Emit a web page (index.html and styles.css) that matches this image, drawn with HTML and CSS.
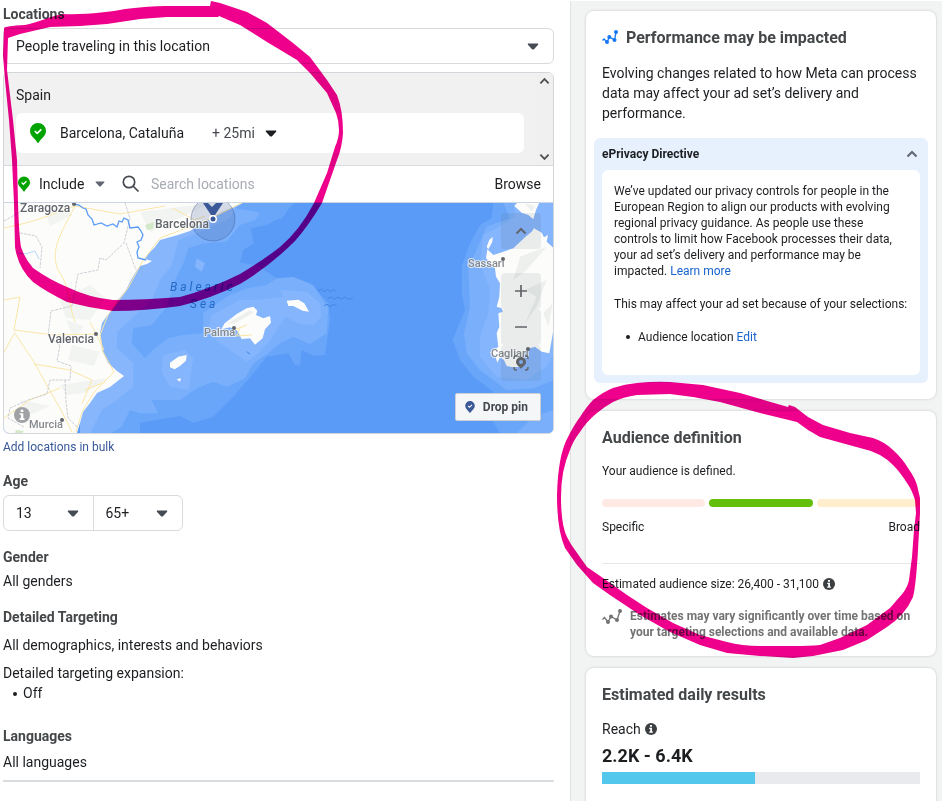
FILE: index.html
```html
<!DOCTYPE html>
<html lang="en">
<head>
<meta charset="utf-8">
<title>Ad set audience</title>
<link rel="stylesheet" href="styles.css">
</head>
<body>
<svg class="defs" aria-hidden="true">
  <symbol id="caret" viewBox="0 0 12 7"><path d="M1 0.5H11L11.3 1.5L7 6.2Q6 7 5 6.2L0.7 1.5Z"/></symbol>
  <symbol id="pin" viewBox="0 0 16 20"><path d="M8 0A8 8 0 0 0 0 8C0 13 5 15.500 7 19.200Q8 20.600 9 19.200C11 15.500 16 13 16 8A8 8 0 0 0 8 0Z"/><path d="M4.800 8L7.200 10.400L11.300 6.300" fill="none" stroke="#fff" stroke-width="1.700"/></symbol>
  <symbol id="info" viewBox="0 0 12 12"><circle cx="6" cy="6" r="6"/><path d="M5 2H7V3.700H5ZM4.200 4.700H7V8.500H7.900V9.700H4.200V8.500H5.200V5.900H4.200Z" fill="#fff"/></symbol>
  <symbol id="up" viewBox="0 0 12 8"><path d="M1.500 6.500L6 2L10.500 6.500" fill="none" stroke="currentColor" stroke-width="2"/></symbol>
  <symbol id="trend" viewBox="0 0 20 18"><path d="M0.500 11.500L2.500 9.500L6 14L9 8.500L15 12L18 3" fill="none" stroke="currentColor" stroke-width="1.300"/><circle cx="6" cy="14" r="2"/><circle cx="9" cy="8.500" r="2"/><circle cx="15" cy="12" r="2"/><circle cx="18" cy="3" r="2"/></symbol>
  <symbol id="trend-bold" viewBox="0 0 16 16"><path d="M0.500 10.500L2 9L5 12L7.500 7L12.500 10L14 2.500" fill="none" stroke="currentColor" stroke-width="1.300"/><circle cx="5" cy="12" r="2"/><circle cx="7.300" cy="7" r="2"/><circle cx="12.500" cy="10" r="2"/><circle cx="14" cy="2" r="2"/></symbol>
</svg>

<div class="app">
  <main class="settings">
    <label class="heading" for="who">Locations</label>
    <div class="picker picker-box">
      <select id="who"><option>People traveling in this location</option></select>
      <svg class="caret" aria-hidden="true"><use href="#caret"/></svg>
    </div>

    <section class="places">
      <div class="chosen">
        <div class="chosen-list">
          <div class="country">Spain</div>
          <div class="place">
            <svg class="pin" aria-hidden="true"><use href="#pin"/></svg>
            <span>Barcelona, Cataluña</span>
            <div class="picker radius">
              <select aria-label="Radius"><option>+ 25mi</option></select>
              <svg class="caret" aria-hidden="true"><use href="#caret"/></svg>
            </div>
          </div>
        </div>
        <div class="scroller">
          <button type="button" aria-label="Scroll up"><svg class="chevron" aria-hidden="true"><use href="#up"/></svg></button>
          <button type="button" aria-label="Scroll down"><svg class="chevron flip" aria-hidden="true"><use href="#up"/></svg></button>
        </div>
      </div>
      <div class="search">
        <svg class="pin pin-small" aria-hidden="true"><use href="#pin"/></svg>
        <div class="picker include">
          <select aria-label="Include or exclude"><option>Include</option></select>
          <svg class="caret caret-small" aria-hidden="true"><use href="#caret"/></svg>
        </div>
        <svg class="lens" viewBox="0 0 18 18" aria-hidden="true"><circle cx="7" cy="7" r="5.700"/><path d="M11 11L16.500 16.500"/></svg>
        <input type="text" aria-label="Search locations" placeholder="Search locations">
        <button type="button" class="browse">Browse</button>
      </div>
      <div class="map">
        <svg class="map-art" viewBox="4 203 549 230" preserveAspectRatio="xMidYMid slice" role="img" aria-label="Map of the Balearic Sea">
          <rect x="4" y="203" width="549" height="230" fill="#5a9bf7"/>
          <!-- west: sea depths and islands -->
          <g transform="translate(80 200) scale(.33333)">
            <path fill="#69a6fa" d="M0 0L650 0L600 55L560 75L512 85L522 130L490 150L480 188L530 195L590 235L640 230L690 250L745 310L750 360L735 465L700 467L665 450L660 497L645 495L625 460L560 470L520 520L460 590L400 650L340 668L300 648L180 668L180 700L0 700Z"/>
            <path fill="#7ab0fb" d="M0 0L500 0L465 25L540 38L525 60L480 75L440 125L370 130L325 145L310 190L285 240L260 320L215 375L160 385L155 430L195 475L225 445L265 415L310 405L370 400L370 340L440 290L500 265L560 255L590 235L640 232L700 256L745 325L740 400L690 432L640 410L600 430L565 460L520 490L495 535L440 560L400 545L350 565L300 600L215 600L235 640L180 640L150 630L125 680L90 700L0 700Z"/>
            <path fill="#87b6fc" d="M0 0L480 0L450 55L350 100L295 120L275 195L240 240L215 300L160 350L112 395L110 445L160 490L160 560L110 600L65 630L30 700L0 700Z"/>
            <path fill="#85b5fc" d="M395 345L480 300L530 300L610 290L600 270L680 275L720 310L725 350L700 375L655 370L615 350L575 415L540 455L500 485L465 460L420 430L385 395ZM250 465L315 450L340 475L325 570L270 560L245 515ZM350 175L375 190L365 215L345 200Z"/>
            <path fill="#fcfcfb" d="M424 388L434 370L470 342L500 325L520 320L532 332L528 345L550 355L570 348L573 368L555 388L548 415L525 434L510 415L485 417L472 392L450 382ZM620 302L655 299L673 310L687 335L668 332L640 318L625 318ZM270 488L295 470L320 465L318 482L300 498L284 508L270 502ZM290 538L303 535L300 545Z"/>
            <path fill="#edf0ed" d="M440 372L510 330L520 338L465 370Z"/>
            <path fill="none" stroke="#f8e3a0" stroke-width="3" d="M462 390L500 375M480 385L470 408L515 405"/>
            <path fill="none" stroke="#4286e4" stroke-width="3" d="M715 272L725 268L733 275L743 268L751 275L761 268L769 275M744 295L754 291L763 298L774 291L784 298L794 291L804 298L818 294M732 317L741 313L750 319L760 313L770 317M500 455L510 462"/>
          </g>
          <!-- east: sea depths, Corsica and Sardinia -->
          <g transform="translate(280 180) scale(.33333)">
            <path fill="#69a6fa" d="M640 68L635 115L600 135L570 190L545 260L545 340L555 390L530 450L518 480L540 540L580 590L640 635L625 700L660 760L822 760L822 68ZM0 68H30L15 105L0 120Z"/>
            <path fill="#7ab0fb" d="M670 68L690 115L620 140L590 210L565 260L570 380L552 460L560 520L600 570L680 630L760 625L822 600V68ZM710 760L760 710L822 690V760Z"/>
            <path fill="#85b5fc" d="M700 68L705 110L650 145L610 165L600 250L630 330L625 400L600 470L600 530L650 590L740 600L800 560L822 520V68Z"/>
            <path fill="#fcfcfb" d="M703 78L712 68L778 68L768 90L760 118L745 105L725 98ZM622 208L640 225L670 215L700 205L735 172L755 155L762 145L785 158L792 172L804 165L800 185L822 205L822 440L808 520L785 515L765 500L740 508L715 545L720 560L700 562L680 558L672 540L660 532L652 548L645 525L630 518L655 500L650 460L658 440L655 400L668 395L665 385L650 380L658 350L660 310L648 290L645 265L618 235ZM628 180L638 170L637 185L625 208L620 200Z"/>
            <path fill="#edf0ed" d="M735 70L765 78L755 95ZM720 230L800 200L740 270L700 300ZM735 330L800 300L770 380L735 430L770 350ZM790 400L818 370L805 440Z"/>
          </g>
          <!-- Iberian mainland -->
          <path fill="#fcfcfb" d="M4 203H242L222 212L205 222L190 231L178 235L160 240L155 247L148 254L145 259L152 261L147 264L140 266L137 270L131 280L126 290L118 300L112 309L107 316L102 323L100 333L102 350L108 363L117 371L124 376L110 387L97 393L90 403L83 412L80 423L77 433H4Z"/>
          <path fill="#f1f4f0" d="M60 300L90 285L105 298L90 320L66 318ZM45 212L66 206L72 215L50 226ZM72 345L100 352L94 366L68 360ZM60 385L108 378L84 393L66 395ZM140 212L210 203L180 218L150 232ZM20 400L50 406L30 415ZM66 320L84 326L74 340Z"/>
          <path fill="#d2e8c7" d="M145 225L154 222L153 229L147 230ZM16 430L24 431L22 433H15Z"/>
          <g fill="none" stroke="#fae6a7" stroke-width="1">
            <path d="M242 203L205 221L160 238L142 262L128 288L108 315L100 335L103 352L114 372L94 392L82 412L76 432"/>
            <path d="M75 206C60 235 50 250 58 270C72 290 68 305 75 322M4 228C35 222 50 215 75 206L120 214L165 206M4 300L20 297L14 330L54 335L96 334M14 334L4 352M14 332L34 362L45 382L62 412L72 432M34 364L70 370L92 380L82 404M4 418L30 400L60 388M85 390L105 382M172 208L195 220L205 216M90 322L104 350"/>
          </g>
          <g fill="none" stroke="#cdced5" stroke-width="1" stroke-dasharray="3 1">
            <path d="M4 221L20 212L25 203M20 233L36 236L42 247L40 268M125 203L130 218L124 243L106 260L100 258L98 270L78 274L72 306L51 311L48 336L60 345L57 361L71 366L70 380L50 380L47 394L28 400L10 408L8 418L24 427M65 380L66 402L68 418L78 428M126 243L136 270"/>
          </g>
          <path fill="none" stroke="#5a9bf7" stroke-width="1.300" d="M74 204L79 205L83 208L86 209L88 215L92 219L94 225L101 223L107 226L113 224L117 227L119 221L122 222L124 218L128 220L130 228L138 227L141 231L143 235L141 240L137 242L139 247L137 252L138 258L146 260"/>
          <path fill="none" stroke="#a9cbfa" stroke-width=".8" d="M17 253L25 254L35 251L39 259"/>
          <circle cx="213" cy="219" r="22" fill="#3b5998" fill-opacity=".2" stroke="#3b5998" stroke-opacity=".6" stroke-width=".7"/>
          <path fill="#3b5998" d="M203 203H208L212 207L216 203H223L215 215H211Z"/>
          <circle cx="213" cy="219" r="4" fill="#fff"/><circle cx="213" cy="219" r="2.500" fill="#3b5998"/>
          <g class="towns">
            <text x="20" y="212">Zaragoza</text><text x="155" y="228">Barcelona</text><text x="48" y="343">Valencia</text>
            <g class="towns-faint"><text x="29" y="428">Murcia</text><text x="204" y="336">Palma</text><text x="468" y="267">Sassari</text><text x="491" y="357">Cagliari</text></g>
          </g>
          <g class="sea"><text x="170" y="291">Balearic</text><text x="190" y="308">Sea</text></g>
          <g fill="#62656b"><circle cx="74" cy="204" r="2"/><circle cx="96" cy="334" r="2"/><circle cx="62" cy="420" r="2"/><circle cx="234" cy="328" r="2"/><circle cx="503" cy="259" r="2"/><circle cx="528" cy="349" r="2"/></g>
        </svg>
        <svg class="map-info" aria-hidden="true"><use href="#info"/></svg>
        <div class="map-tools">
          <button type="button" class="tool" aria-label="Collapse map"><svg class="chevron" aria-hidden="true"><use href="#up"/></svg></button>
          <div class="zoom">
            <button type="button" class="tool" aria-label="Zoom in"><svg class="sign" viewBox="0 0 12 12" aria-hidden="true"><path d="M0 6H12M6 0V12"/></svg></button>
            <button type="button" class="tool" aria-label="Zoom out"><svg class="sign" viewBox="0 0 12 12" aria-hidden="true"><path d="M0 6H12"/></svg></button>
            <button type="button" class="tool" aria-label="Locate"><svg class="locate" viewBox="0 0 16 16" aria-hidden="true"><path d="M1 4V3Q1 1 3 1H4M12 1H13Q15 1 15 3V4M15 12V13Q15 15 13 15H12M4 15H3Q1 15 1 13V12" fill="none" stroke="currentColor" stroke-width="1.400"/><path fill-rule="evenodd" d="M8 2A5 5 0 0 0 3 7C3 10 6.500 11.500 8 14C9.500 11.500 13 10 13 7A5 5 0 0 0 8 2ZM8 5A2 2 0 1 1 8 9A2 2 0 0 1 8 5Z"/></svg></button>
          </div>
          <button type="button" class="drop"><svg class="pin-tiny" aria-hidden="true"><use href="#pin"/></svg>Drop pin</button>
        </div>
      </div>
    </section>
    <a class="bulk" href="#">Add locations in bulk</a>

    <section class="block">
      <h2 class="heading">Age</h2>
      <div class="ages">
        <div class="picker"><select aria-label="Minimum age"><option>13</option></select><svg class="caret" aria-hidden="true"><use href="#caret"/></svg></div>
        <div class="picker"><select aria-label="Maximum age"><option>65+</option></select><svg class="caret" aria-hidden="true"><use href="#caret"/></svg></div>
      </div>
    </section>
    <section class="block">
      <h2 class="heading">Gender</h2>
      <p>All genders</p>
    </section>
    <section class="block block-open">
      <h2 class="heading">Detailed Targeting</h2>
      <p>All demographics, interests and behaviors</p>
      <div><p>Detailed targeting expansion:</p><ul class="dots"><li>Off</li></ul></div>
    </section>
    <section class="block block-last">
      <h2 class="heading">Languages</h2>
      <p>All languages</p>
    </section>
  </main>

  <aside class="side">
    <section class="card impact">
      <h2 class="title"><svg class="trend-blue" aria-hidden="true"><use href="#trend-bold"/></svg>Performance may be impacted</h2>
      <p class="lead">Evolving changes related to how Meta can process data may affect your ad set’s delivery and performance.</p>
      <div class="directive">
        <button type="button" class="directive-head">ePrivacy Directive<svg class="chevron" aria-hidden="true"><use href="#up"/></svg></button>
        <div class="directive-body">
          <p>We’ve updated our privacy controls for people in the European Region to align our products with evolving regional privacy guidance. As people use these controls to limit how Facebook processes their data, your ad set’s delivery and performance may be impacted. <a href="#">Learn more</a></p>
          <p>This may affect your ad set because of your selections:</p>
          <ul class="dots"><li>Audience location <a href="#">Edit</a></li></ul>
        </div>
      </div>
    </section>

    <section class="card audience">
      <h2 class="title">Audience definition</h2>
      <p class="state">Your audience is defined.</p>
      <div class="meter"><span class="low"></span><span class="mid"></span><span class="high"></span></div>
      <div class="ends"><span>Specific</span><span>Broad</span></div>
      <p class="size">Estimated audience size: 26,400 - 31,100 <svg class="info" aria-hidden="true"><use href="#info"/></svg></p>
      <div class="note"><svg class="trend" aria-hidden="true"><use href="#trend"/></svg><p>Estimates may vary significantly over time based on your targeting selections and available data.</p></div>
    </section>

    <section class="card results">
      <h2 class="title">Estimated daily results</h2>
      <p class="reach">Reach <svg class="info" aria-hidden="true"><use href="#info"/></svg></p>
      <p class="figure">2.2K - 6.4K</p>
      <div class="bar"><div class="bar-fill" style="width:48%"></div></div>
    </section>
  </aside>
</div>

<svg class="marker" width="942" height="801" viewBox="0 0 942 801" aria-hidden="true">
  <path fill-rule="evenodd" d="M4 28Q5 26 25 25C40 22 50 16 63 14C85 15 110 12 125 9Q150 6 165 6H210L211 1L220 3L247 12L267 23L293 43L310 57L327 80L337 95Q343 110 343 133Q342 148 337 160L322 203Q309 225 295 241Q270 266 240 284Q210 299 180 306Q145 311 113 311Q90 308 67 302Q45 291 33 282Q18 268 15 247L14 203L12 160L9 120L5 80L3 55Z
  M8 38L7 70L13 120L17 160L18 203Q19 235 21 247Q25 259 33 268Q50 280 67 287Q90 298 113 300Q145 300 180 297Q210 289 240 274Q262 261 280 247Q300 230 314 203L327 173L335 147Q339 138 339 130Q339 121 336 113L327 93L310 73L297 60L267 42L240 25L219 16L218 17H167L140 19L107 24L80 26L50 27L20 34Z"/>
  <path fill-rule="evenodd" d="M557 495Q558 455 568 437Q574 425 580 417Q587 406 593 400Q603 392 613 388Q625 384 637 383Q655 381 670 382L703 385L740 393L788 407L789 405L795 407L808 417L823 425L850 433L873 438Q885 442 893 450Q902 458 908 468Q915 478 917 485L920 498V513L918 550Q916 585 913 597Q909 606 903 613Q896 621 887 627L867 640L843 650L813 656L793 658L760 656L727 653L700 645L670 632L640 615L610 595L593 583L577 565L565 548Q557 530 557 495Z
  M561 497Q561 525 567 537Q571 545 575 550L587 567L603 578L627 595L647 608L673 623L700 635L727 642Q742 646 760 646H793Q810 646 820 645L840 638L867 625L890 608L903 593Q908 586 909 580L912 557L914 530L916 513L915 500Q912 490 907 483Q900 472 893 465Q887 459 880 455Q870 450 860 448L820 437L808 430L797 422L760 413L720 402L693 397L670 394L637 395Q623 397 613 402Q604 407 597 413Q587 421 580 432Q573 441 570 450Q561 470 561 497Z"/>
</svg>
</body>
</html>
```
FILE: styles.css
```css
* { box-sizing: border-box; }

body {
  margin: 0;
  background: #fff;
  color: #1c1e21;
  font: 14px/20px Roboto, "Liberation Sans", sans-serif;
}

h2, p, ul { margin: 0; }
a { color: #1763cf; text-decoration: none; }

button, select, input {
  margin: 0;
  padding: 0;
  border: 0;
  background: none;
  color: inherit;
  font: inherit;
}

svg { display: block; flex: none; fill: currentColor; }
.defs { position: absolute; width: 0; height: 0; }

.app {
  display: grid;
  grid-template-columns: minmax(0, 1fr) 372px;
  height: 100vh;
  overflow: hidden;
}

.settings { padding: 4px 16px 0 3px; overflow: hidden; }

.heading {
  display: block;
  color: #444749;
  font-size: 14px;
  font-weight: 700;
  line-height: 20px;
}

/* Select with a caret laid over its right end */
.picker { display: grid; align-items: center; }
.picker select {
  grid-area: 1 / 1;
  width: 100%;
  height: 34px;
  padding: 0 12px;
  appearance: none;
}
.picker .caret {
  grid-area: 1 / 1;
  justify-self: end;
  margin-right: 14px;
  pointer-events: none;
}
.picker-box { margin-top: 4px; border: 1px solid #d8dadd; border-radius: 6px; }
.caret { width: 12px; height: 7px; color: #444b52; }
.picker .caret-small { width: 10px; height: 6px; margin: 0; color: #606770; }

.pin { width: 16px; height: 20px; color: #00a400; }
.pin-small { width: 12px; height: 16px; }
.pin-tiny { width: 10px; height: 12px; color: #3b5998; }
.chevron { width: 12px; height: 8px; color: #606770; }
.flip { transform: rotate(180deg); }

.dots { list-style: none; }
.dots li::before {
  content: "";
  display: inline-block;
  width: 4px;
  height: 4px;
  margin-right: 6px;
  border-radius: 50%;
  background: currentColor;
  vertical-align: 2px;
}

.places {
  margin-top: 8px;
  overflow: hidden;
  border: 1px solid #d2d5da;
  border-radius: 6px;
}
.chosen { display: flex; background: #f1f1f1; border-bottom: 1px solid #d8dadd; }
.chosen-list { flex: 1; padding: 12px; }
.place {
  display: flex;
  align-items: center;
  height: 40px;
  margin-top: 8px;
  padding: 0 14px;
  border-radius: 6px;
  background: #fff;
}
.place span { margin: 0 28px 0 14px; }
.radius { width: 65px; color: #444950; }
.radius select { padding: 0; }
.radius .caret { margin: 0; color: #1c1e21; }
.scroller {
  display: flex;
  flex-direction: column;
  justify-content: space-between;
  width: 17px;
  padding: 4px 3px;
  background: #f0f0f0;
}
.scroller .chevron { width: 11px; color: #505050; }

.search { display: flex; align-items: center; height: 36px; padding: 0 12px 0 14px; }
.include { width: 66px; margin-left: 9px; }
.include select { padding: 0; }
.lens { width: 18px; height: 18px; margin: 0 11px 0 17px; fill: none; stroke: #444950; stroke-width: 1.700px; }
.search input { flex: 1; min-width: 0; height: 34px; outline: 0; }
.search input::placeholder { color: #a8acb3; opacity: 1; }

.map { position: relative; height: 231px; border-top: 1px solid #ccd5e3; }
.map-art { width: 100%; height: 100%; }
.towns { font-size: 12px; fill: #62656b; stroke: #fff; stroke-opacity: .7; stroke-width: 2px; paint-order: stroke; font-weight: 500; }
.towns-faint { font-size: 11px; fill: #85888d; }
.sea { font-size: 12px; font-style: italic; letter-spacing: 3px; fill: #2468c4; }
.map-info { position: absolute; left: 10px; bottom: 10px; width: 16px; height: 16px; color: #a0a2a6; }
.map-tools {
  position: absolute;
  right: 12px;
  bottom: 12px;
  display: flex;
  flex-direction: column;
  align-items: flex-end;
}
.tool {
  display: grid;
  place-items: center;
  width: 40px;
  height: 36px;
  border-radius: 4px;
  background: rgba(80, 85, 95, .1);
  color: #606368;
}
.zoom { margin: 24px 0 12px; }
.sign { width: 12px; height: 12px; stroke: currentColor; stroke-width: 1.700px; }
.locate { width: 16px; height: 16px; }
.drop {
  display: flex;
  align-items: center;
  gap: 8px;
  height: 28px;
  padding: 0 12px 0 9px;
  border: 1px solid #ccd0d5;
  border-radius: 2px;
  background: #f5f6f7;
  color: #444950;
  font-size: 12px;
  font-weight: 700;
}

.bulk { display: block; width: max-content; margin-top: 3px; color: #385898; font-size: 12px; }

.block { display: flex; flex-direction: column; gap: 4px; margin-top: 16px; }
.bulk + .block { margin-top: 14px; }
.ages { display: flex; width: 180px; border: 1px solid #d8dadd; border-radius: 6px; }
.ages .picker { flex: 1; }
.ages .picker + .picker { border-left: 1px solid #d8dadd; }
.block-open { gap: 8px; }
.block-open .dots { padding-left: 10px; }
.block-last { gap: 6px; margin-top: 23px; padding-bottom: 8px; border-bottom: 2px solid #d9dde0; }

.side {
  display: flex;
  flex-direction: column;
  gap: 12px;
  margin-top: 1px;
  padding: 10px 6px 0 15px;
  border-left: 1px solid #e0e2e2;
  background: #f2f4f4;
}
.card {
  flex: none;
  padding: 16px;
  border-radius: 8px;
  background: #fff;
  box-shadow: 0 0 3px rgba(0, 0, 0, .18);
}
.title {
  display: flex;
  align-items: center;
  gap: 8px;
  color: #444749;
  font-size: 16px;
  font-weight: 700;
  line-height: 22px;
}
.trend { width: 20px; height: 18px; color: #737373; }
.trend-blue { width: 16px; height: 16px; color: #1877f2; }

.lead { margin-top: 14px; }
.directive { margin: 15px -8px 0; padding: 0 8px 8px; border-radius: 6px; background: #e7f0fd; }
.directive-head {
  display: flex;
  align-items: center;
  justify-content: space-between;
  width: 100%;
  height: 32px;
  padding-right: 2px;
  font-size: 12px;
  font-weight: 700;
}
.directive-body {
  display: flex;
  flex-direction: column;
  gap: 17px;
  padding: 13px 12px 30px;
  border-radius: 6px;
  background: #fff;
  font-size: 12px;
  line-height: 16px;
}
.directive-body .dots { padding-left: 12px; }
.directive-body .dots li::before { margin-right: 8px; }

.audience { font-size: 12px; }
.state { margin-top: 12px; }
.meter { display: flex; gap: 4px; margin-top: 18px; }
.meter span { flex: 1; height: 8px; border-radius: 4px; }
.low { background: #ffe9e5; }
.mid { background: #64bf0d; }
.high { background: #ffeecb; }
.ends { display: flex; justify-content: space-between; margin-top: 10px; padding-bottom: 26px; border-bottom: 1px solid #e4e6e8; }
.size { display: flex; align-items: center; gap: 4px; margin-top: 10px; }
.info { width: 12px; height: 12px; color: #3c3f42; }
.note { display: flex; gap: 8px; margin-top: 14px; color: #737373; font-weight: 700; line-height: 16px; }

.results { padding-bottom: 40px; }
.reach { display: flex; align-items: center; gap: 4px; margin-top: 13px; }
.figure { margin-top: 7px; font-size: 18px; font-weight: 700; line-height: 20px; }
.bar { margin-top: 6px; background: #e9eaee; }
.bar-fill { height: 12px; background: #54c7ec; }

/* Highlighter rings drawn over the page */
.marker {
  position: absolute;
  top: 0;
  left: 0;
  fill: #ee008c;
  mix-blend-mode: multiply;
  pointer-events: none;
}
```
